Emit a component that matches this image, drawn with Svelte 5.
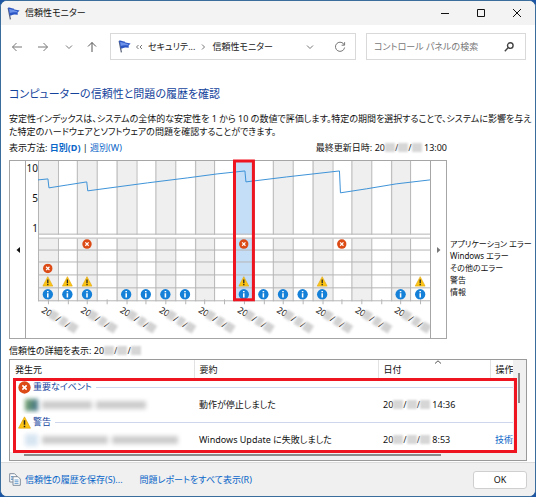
<script>
  const columns = 20
  const pitch = 19.7
  const selected = 10

  const rows = [78, 90, 102, 115, 128, 141]
  const icons = {
    error: { size: 10, marks: [[2, 0], [10, 0], [15, 0], [0, 2]] },
    warning: { size: 11, marks: [[0, 3], [1, 3], [2, 3], [10, 3], [14, 3], [19, 3]] },
    info: {
      size: 11,
      marks: [0, 1, 2, 4, 5, 6, 7, 10, 11, 12, 13, 14, 18, 19].map((c) => [c, 4]),
    },
  }
  const marks = Object.entries(icons).flatMap(([type, { size, marks }]) =>
    marks.map(([col, row]) => ({
      type,
      size,
      x: (col + 0.5) * pitch - size / 2,
      y: (rows[row] + rows[row + 1]) / 2 - size / 2 - 0.5,
    }))
  )

  const stability =
    '0,19 10,18 11,27 30,24 49,21 50,30 80,26 110,22 150,17 180,13 208,10 209,21 250,16 303,10 304,32 330,28 360,23 394,19'

  const groups = [
    { icon: 'error', name: '重要なイベント', summary: '動作が停止しました', time: '14:36', action: '', source: 'app' },
    { icon: 'warning', name: '警告', summary: 'Windows Update に失敗しました', time: '8:53', action: '技術', source: 'update' },
  ]

  let query = $state('')
</script>

{#snippet date(time)}
  <span class="date">20<i></i>/<i></i>/<i></i>{time ? ' ' + time : ''}</span>
{/snippet}

{#snippet flag()}
  <svg class="flag" viewBox="0 0 13 13" aria-hidden="true">
    <path d="M1.2 1 3.4 12.4" stroke="#5b6478" stroke-width="1.3" />
    <path d="M1 .8C3.4 0 4.4 1.8 6.6 1.4L7.4 2.6 12.6 3.4 10.6 5.4 10.8 7.8 7.6 7.6C5.8 7.4 4.4 8.8 2.8 8.6Z" fill="#2c55c4" />
    <path d="M2.2 2.2C3.8 1.6 4.8 3.2 6.6 2.8L7.6 3.6 10.6 4.2 9.4 5.4C7 5 5 5 2.8 6Z" fill="#6c92ea" />
  </svg>
{/snippet}

<svg class="sprite" aria-hidden="true">
  <symbol id="error" viewBox="0 0 12 12">
    <circle cx="6" cy="6" r="5.7" fill="#dc4a16" />
    <path d="M4 4 8 8M8 4 4 8" stroke="#fff" stroke-width="1.5" />
  </symbol>
  <symbol id="warning" viewBox="0 0 12 12">
    <path d="M6 .8 11.5 11.2H.5Z" fill="#fcc414" stroke="#e0a100" stroke-width=".6" stroke-linejoin="round" />
    <path d="M6 4V8M6 8.9V10.3" stroke="#222" stroke-width="1.4" />
  </symbol>
  <symbol id="info" viewBox="0 0 12 12">
    <circle cx="6" cy="6" r="5.7" fill="#1580d8" />
    <path d="M6 2.3V3.8M6 4.9V9.6" stroke="#fff" stroke-width="1.7" />
  </symbol>
</svg>

<div class="window">
  <header class="titlebar">
    {@render flag()}
    <span class="title">信頼性モニター</span>
    <button aria-label="最小化"><svg viewBox="0 0 10 10"><path d="M1 5.5H9" /></svg></button>
    <button aria-label="最大化"><svg viewBox="0 0 10 10"><path d="M1.5 1.5H8.5V8.5H1.5Z" /></svg></button>
    <button aria-label="閉じる"><svg viewBox="0 0 10 10"><path d="M1 1 9 9M9 1 1 9" /></svg></button>
  </header>

  <nav>
    <div class="arrows">
      <button aria-label="戻る"><svg viewBox="0 0 12 12"><path d="M11 6H1.5M5.5 2 1.5 6 5.5 10" /></svg></button>
      <button aria-label="進む"><svg viewBox="0 0 12 12"><path d="M1 6H10.5M6.5 2 10.5 6 6.5 10" /></svg></button>
      <button aria-label="最近表示した場所"><svg viewBox="0 0 12 12"><path d="M3 4.5 6 7.5 9 4.5" /></svg></button>
      <button class="up" aria-label="上へ"><svg viewBox="0 0 12 12"><path d="M6 11V1.5M2 5.5 6 1.5 10 5.5" /></svg></button>
    </div>
    <div class="address">
      {@render flag()}
      <svg class="sep" viewBox="0 0 8 8"><path d="M3.5 2 1.5 4 3.5 6M7 2 5 4 7 6" /></svg>
      <a href="#security">セキュリテ...</a>
      <svg class="sep" viewBox="0 0 8 8"><path d="M3 1.5 5.5 4 3 6.5" /></svg>
      <a href="#monitor">信頼性モニター</a>
      <button class="history" aria-label="以前の場所"><svg viewBox="0 0 12 12"><path d="M3 4.5 6 7.5 9 4.5" /></svg></button>
      <button aria-label="更新"><svg viewBox="0 0 12 12"><path d="M10.3 4A4.6 4.6 0 1 0 10.6 6.5M10.6 1.2V4.2H7.6" /></svg></button>
    </div>
    <div class="search">
      <input type="text" aria-label="検索" placeholder="コントロール パネルの検索" bind:value={query} />
      <button aria-label="検索する"><svg viewBox="0 0 12 12"><circle cx="7.3" cy="4.6" r="2.8" /><path d="M5.3 6.6 1.8 10.2" /></svg></button>
    </div>
  </nav>

  <main>
    <h1>コンピューターの信頼性と問題の履歴を確認</h1>
    <p>安定性インデックスは、システムの全体的な安定性を 1 から 10 の数値で評価します。特定の期間を選択することで、システムに影響を与えた特定のハードウェアとソフトウェアの問題を確認することができます。</p>

    <div class="options">
      <span>表示方法: <a class="current" href="#days">日別(D)</a> | <a href="#weeks">週別(W)</a></span>
      <span>最終更新日時: {@render date('13:00')}</span>
    </div>

    <div class="report">
      <div class="chart">
        <button aria-label="前の期間"><svg viewBox="0 0 6 8"><path d="M5 1V7L1.5 4Z" fill="#111" /></svg></button>
        <div class="axis"><span>10</span><span>5</span><span>1</span></div>
        <svg class="plot" viewBox="0 0 394 178" preserveAspectRatio="xMinYMin meet">
          {#each Array(columns) as _, i}
            {@const x = i * pitch}
            {#if i === selected || i % 2 === 0}
              <rect {x} y="0" width={pitch} height="141" fill={i === selected ? '#c5def7' : '#efefef'} />
            {/if}
            <path class="grid" d="M{Math.round(x) + 0.5} 0V141" />
            <path class="grid" d="M{Math.round(x + pitch / 2) + 0.5} 139V144" />
          {/each}
          <rect x="1" y="74" width="393" height="4" fill="#fff" />
          <path class="grid" d="M0 73.5H394" />
          {#each rows as y}
            <path class="grid" d="M0 {y - 0.5}H394" />
          {/each}
          <polyline points={stability} />
          {#each marks as { type, size, x, y }}
            <use href="#{type}" {x} {y} width={size} height={size} />
          {/each}
          <svg width="394" height="178">
            {#each Array(columns / 2) as _, i}
              <g transform="translate({i * 2 * pitch + 5} 148) rotate(32)">
                <text x="0" y="4">20</text>
                <rect class="smudge" x="9" y="-4" width="8" height="9" />
                <text x="17" y="4">/</text>
                <rect class="smudge" x="21" y="-4" width="7" height="9" />
                <text x="28" y="4">/</text>
                <rect class="smudge" x="31" y="-4" width="9" height="9" />
              </g>
            {/each}
          </svg>
          <rect class="highlight" x="197.5" y="0" width="19" height="139.5" />
        </svg>
        <button aria-label="次の期間"><svg viewBox="0 0 6 8"><path d="M1 1V7L4.5 4Z" fill="#777" /></svg></button>
      </div>
      <ul>
        <li>アプリケーション エラー</li>
        <li>Windows エラー</li>
        <li>その他のエラー</li>
        <li>警告</li>
        <li>情報</li>
      </ul>
    </div>

    <div class="caption">信頼性の詳細を表示: {@render date()}</div>

    <div class="details">
      <table>
        <colgroup><col class="source" /><col class="summary" /><col class="day" /><col /></colgroup>
        <thead>
          <tr>
            <th>発生元</th>
            <th>要約</th>
            <th class="sorted">日付<svg viewBox="0 0 8 4"><path d="M1 3.5 4 .8 7 3.5" /></svg></th>
            <th>操作</th>
          </tr>
        </thead>
        {#each groups as group}
          <tbody>
            <tr class="group">
              <th colspan="4">
                <div><svg><use href="#{group.icon}" /></svg>{group.name}<hr /></div>
              </th>
            </tr>
            <tr class="event">
              <td><div class="source {group.source}"><b></b><i></i><i></i></div></td>
              <td>{group.summary}</td>
              <td>{@render date(group.time)}</td>
              <td>{#if group.action}<a href="#details">{group.action}</a>{/if}</td>
            </tr>
          </tbody>
        {/each}
      </table>
      <div class="vscroll"><span></span></div>
      <div class="hscroll"><span></span></div>
      <div class="frame"></div>
    </div>
  </main>

  <footer>
    <svg class="copy" viewBox="0 0 12 13" aria-hidden="true">
      <path d="M.7.7H5.5L7.5 2.7V9H.7Z" />
      <path d="M2 3.5H4M2 5H4M2 6.5H4" stroke="#6aa0d0" />
      <path d="M4 3.7H9L11.3 6V12.3H4Z" />
      <path d="M5.5 7H9.5M5.5 8.7H9.5M5.5 10.4H9.5" stroke="#6aa0d0" />
    </svg>
    <a href="#save">信頼性の履歴を保存(S)...</a>
    <a href="#reports">問題レポートをすべて表示(R)</a>
    <button>OK</button>
  </footer>
</div>

<style>
  :global(body) {
    background: #1d55a5;
  }
  .window {
    display: flex;
    flex-direction: column;
    box-sizing: border-box;
    min-height: 100vh;
    border: 1px solid #3a6c9c;
    border-radius: 7px;
    overflow: hidden;
    background: #fff;
    color: #111;
    font: 9px/14px 'Noto Sans', 'Noto Sans CJK JP', sans-serif;
    font-feature-settings: 'palt';
  }
  .sprite {
    position: absolute;
    width: 0;
    height: 0;
  }
  button {
    display: flex;
    align-items: center;
    justify-content: center;
    padding: 0;
    border: 0;
    background: none;
    color: inherit;
    font: inherit;
    cursor: pointer;
  }
  a {
    color: #0a66c8;
    text-decoration: none;
  }
  svg {
    flex: none;
    fill: none;
  }
  .flag {
    width: 13px;
    height: 13px;
  }

  .titlebar {
    display: flex;
    align-items: center;
    height: 24px;
    padding-left: 6px;
    background: #f3f3f3;
  }
  .title {
    flex: 1;
    margin-left: 5px;
  }
  .titlebar button {
    width: 36px;
    height: 24px;
  }
  .titlebar button svg {
    width: 10px;
    height: 10px;
    stroke: #111;
  }

  nav {
    display: flex;
    padding: 8px 9px 0;
  }
  nav svg {
    stroke: #777;
  }
  nav .flag {
    stroke: none;
  }
  nav button svg {
    width: 12px;
    height: 12px;
  }
  .arrows {
    display: flex;
    flex: none;
    width: 100px;
  }
  .arrows button {
    width: 16px;
    margin-right: 11px;
  }
  .arrows button:nth-child(3) {
    margin-right: 8px;
  }
  .arrows .up svg {
    stroke: #555;
  }
  .address,
  .search {
    display: flex;
    align-items: center;
    box-sizing: border-box;
    min-width: 0;
    height: 27px;
    border: 1px solid #d9d9d9;
  }
  .address {
    flex: 1;
    padding: 0 9px 0 7px;
    margin-right: 10px;
  }
  .address a {
    color: #222;
    white-space: nowrap;
  }
  .sep {
    width: 8px;
    height: 8px;
    margin: 0 5px 0 4px;
  }
  .history {
    margin-left: auto;
    margin-right: 18px;
  }
  .search {
    width: 31%;
    padding: 0 10px 0 7px;
  }
  input {
    flex: 1;
    min-width: 0;
    padding: 0;
    border: 0;
    outline: 0;
    background: none;
    font: inherit;
    font-feature-settings: inherit;
  }
  input::placeholder {
    color: #777;
  }
  .search svg {
    stroke: #444;
    stroke-width: 1.4;
  }

  main {
    flex: 1;
    padding: 24px 8px 0;
  }
  h1 {
    margin: 0 0 8px;
    color: #14439c;
    font-size: 11px;
    font-weight: 400;
    line-height: 20px;
  }
  p {
    margin: 0 -8px 0 0;
    line-height: 13px;
  }
  .options {
    display: flex;
    justify-content: space-between;
    margin: 3px 80px 5px 0;
  }
  .current {
    font-weight: 700;
  }
  .date {
    white-space: nowrap;
  }
  .date i {
    display: inline-block;
    width: 10px;
    height: 9px;
    background: #d6d6d6;
    filter: blur(1px);
    vertical-align: -1px;
  }

  .report {
    display: flex;
  }
  .chart {
    display: flex;
    flex: 1;
    align-items: flex-start;
    border: 1px solid #a6a6a6;
  }
  .chart button {
    align-self: stretch;
    width: 15px;
  }
  .chart button svg {
    width: 6px;
    height: 8px;
  }
  .axis {
    display: flex;
    flex-direction: column;
    justify-content: space-between;
    align-self: stretch;
    box-sizing: border-box;
    width: 13px;
    padding-bottom: 103px;
    border-left: 1px solid #a6a6a6;
    font-size: 10px;
    text-align: right;
  }
  .plot {
    flex: 1;
    min-width: 0;
    border-right: 1px solid #a6a6a6;
    overflow: visible;
  }
  .grid {
    stroke: #b4b4b4;
  }
  polyline {
    stroke: #3c92d8;
  }
  .plot text {
    fill: #111;
  }
  .smudge {
    fill: #d2d2d2;
    filter: blur(1px);
  }
  .highlight {
    stroke: #ee1420;
    stroke-width: 3;
  }
  ul {
    width: 77px;
    margin: 0;
    padding: 78px 0 0 3px;
    list-style: none;
    font-size: 8px;
    line-height: 12px;
    white-space: nowrap;
  }

  .caption {
    margin: 5px 0 1px;
  }
  .details {
    position: relative;
    display: grid;
    grid-template-columns: 1fr 13px;
    grid-template-rows: 92px 8px;
    align-items: start;
    border: 1px solid #9a9a9a;
    overflow: hidden;
  }
  table {
    width: 100%;
    border-collapse: collapse;
    table-layout: fixed;
  }
  col.source,
  col.summary {
    width: 184px;
  }
  col.day {
    width: 112px;
  }
  th,
  td {
    padding: 0 0 0 5px;
    font-weight: 400;
    text-align: left;
    white-space: nowrap;
    overflow: hidden;
  }
  thead th {
    height: 19px;
    border-right: 1px solid #e2e2e2;
  }
  thead th:last-child {
    border: 0;
  }
  .sorted {
    position: relative;
  }
  .sorted svg {
    position: absolute;
    top: 0;
    left: 50%;
    width: 8px;
    height: 4px;
    stroke: #555;
  }
  .group th {
    height: 16px;
    padding-left: 8px;
    color: #14439c;
  }
  .group div {
    display: flex;
    align-items: center;
    gap: 2px;
  }
  .group svg {
    width: 13px;
    height: 13px;
  }
  hr {
    flex: 1;
    height: 1px;
    margin: 0 0 0 2px;
    border: 0;
    background: #cdd6ec;
  }
  .event td {
    height: 19px;
  }
  div.source {
    display: flex;
    align-items: center;
    gap: 4px;
    margin-left: 10px;
    filter: blur(2px);
  }
  .source b {
    width: 13px;
    height: 12px;
    background: linear-gradient(100deg, #76a56a, #3e6f8c);
  }
  .source i {
    width: 50px;
    height: 8px;
    background: #ccc;
  }
  .update b {
    background: #d8e6f2;
  }
  .update i {
    width: 66px;
  }
  .vscroll {
    grid-row: 1 / 3;
    grid-column: 2;
    align-self: stretch;
    padding: 13px 0 0 5px;
    background: #f0f0f0;
  }
  .vscroll span {
    display: block;
    width: 2px;
    height: 30px;
    background: #8a8a8a;
  }
  .hscroll {
    align-self: stretch;
    padding: 2px 72px 0 14px;
    background: #f0f0f0;
  }
  .hscroll span {
    display: block;
    height: 2px;
    background: #8a8a8a;
  }
  .frame {
    position: absolute;
    inset: 18px 9px 7px 3px;
    border: 3px solid #ee1420;
    pointer-events: none;
  }

  footer {
    display: flex;
    align-items: center;
    height: 33px;
    padding: 0 8px;
    border-top: 1px solid #dcdcdc;
    background: #f0f0f0;
  }
  .copy {
    width: 12px;
    height: 13px;
    margin-right: 4px;
    stroke: #7f8b99;
    fill: #fff;
  }
  footer a {
    margin-right: 17px;
  }
  footer button {
    width: 54px;
    height: 18px;
    margin-left: auto;
    border: 1px solid #cfcfcf;
    border-radius: 3px;
    background: #fff;
  }
</style>
